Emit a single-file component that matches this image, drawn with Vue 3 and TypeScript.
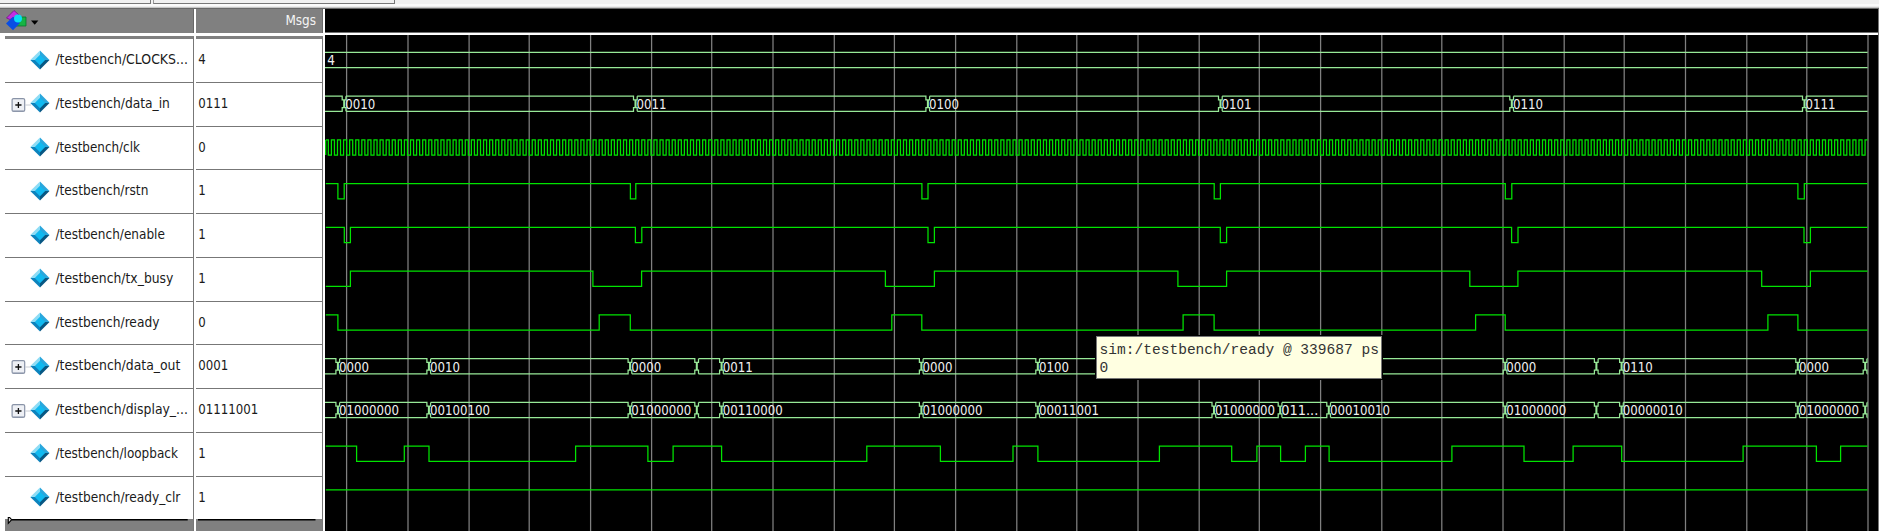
<script setup lang="ts">
interface Signal {
  name: string
  width: number
  value: string
  bus?: boolean
}

interface BusMark {
  x: number
  text?: string
}

interface BusLabel {
  x: number
  y: number
  text: string
  width: number
}

const ROW = 43.75
const LEFT = 325
const END = 1868
const AMP = 15.1

const signals: Signal[] = [
  { name: '/testbench/CLOCKS...', width: 132.5, value: '4' },
  { name: '/testbench/data_in', width: 114.5, value: '0111', bus: true },
  { name: '/testbench/clk', width: 84.5, value: '0' },
  { name: '/testbench/rstn', width: 93, value: '1' },
  { name: '/testbench/enable', width: 109.5, value: '1' },
  { name: '/testbench/tx_busy', width: 118, value: '1' },
  { name: '/testbench/ready', width: 104, value: '0' },
  { name: '/testbench/data_out', width: 125, value: '0001', bus: true },
  { name: '/testbench/display_...', width: 132.5, value: '01111001', bus: true },
  { name: '/testbench/loopback', width: 122.5, value: '1' },
  { name: '/testbench/ready_clr', width: 125, value: '1' },
]

const gridLines: number[] = [
  347, 408.4, 469.5, 529.6, 591, 652, 712.1, 773.4, 834.7, 894.8, 956, 1017.2, 1077.2,
  1138.4, 1199.6, 1259.7, 1321, 1382.2, 1442.2, 1503.4, 1564.6, 1624.6, 1685.9, 1747.2, 1807.2, 1868.4,
]

const top = (row: number): number => 52.4 + row * ROW

function wave(row: number, startHigh: boolean, edges: number[]): string {
  const hi = top(row)
  let high = startHigh
  let d = `M${LEFT + 1.2} ${high ? hi : hi + AMP}`
  for (const x of edges) {
    high = !high
    d += `H${x}V${high ? hi : hi + AMP}`
  }
  return d + `H${END}`
}

const clockEdges: number[] = []
for (let x = 328.75; x < END; x += 3.043) clockEdges.push(x)

const bitPaths: string[] = [
  wave(2, true, clockEdges) + `M${LEFT + 1.1} ${top(2)}v${AMP}`,
  wave(3, true, [338.3, 344.6, 630.8, 636.2, 922.3, 928.4, 1214.6, 1220.8, 1505.7, 1512.2, 1798.3, 1804.7]),
  wave(4, true, [344.7, 350.8, 635.8, 642.2, 928.4, 934.8, 1220.7, 1227, 1512, 1518.4, 1804.4, 1810.8]),
  wave(5, false, [350.8, 593.3, 642, 885.8, 934.8, 1178.3, 1227, 1470.2, 1518.3, 1762.1, 1810.8]),
  wave(6, true, [338.3, 599.6, 630.7, 892.2, 922.2, 1183.5, 1214.5, 1476, 1505.6, 1768.3, 1798.3]),
  wave(9, true, [
    357, 404.7, 429.4, 576, 648.3, 673.5, 722, 867.2, 940.8, 1013.4, 1038.3, 1159.8, 1232.1, 1257.3,
    1281, 1305.8, 1329.5, 1452.3, 1524.4, 1573.5, 1622.1, 1743.5, 1816.8, 1841,
  ]),
  wave(10, true, []),
]

const dataIn: BusMark[] = [
  { x: 344.6, text: '0010' }, { x: 635.9, text: '0011' }, { x: 928.3, text: '0100' },
  { x: 1220.9, text: '0101' }, { x: 1512.2, text: '0110' }, { x: 1804.9, text: '0111' },
]
const dataOut: BusMark[] = [
  { x: 338.3, text: '0000' }, { x: 429.3, text: '0010' }, { x: 630.5, text: '0000' }, { x: 697.2 },
  { x: 722, text: '0011' }, { x: 921.8, text: '0000' }, { x: 1038.2, text: '0100' },
  { x: 1505.6, text: '0000' }, { x: 1596.8 }, { x: 1622, text: '0110' }, { x: 1798.2, text: '0000' }, { x: 1865.6 },
]
const display: BusMark[] = [
  { x: 338.3, text: '01000000' }, { x: 429.3, text: '00100100' }, { x: 630.5, text: '01000000' }, { x: 697.2 },
  { x: 722, text: '00110000' }, { x: 921.8, text: '01000000' }, { x: 1038.2, text: '00011001' },
  { x: 1214.4, text: '01000000' }, { x: 1280.6, text: '011...' }, { x: 1329.2, text: '00010010' },
  { x: 1505.6, text: '01000000' }, { x: 1596.8 }, { x: 1622, text: '00000010' },
  { x: 1798.2, text: '01000000' }, { x: 1865.6 },
]

// Each value change pinches both rails together into a narrow waist.
function busPath(row: number, marks: BusMark[]): string {
  const a = top(row)
  const b = a + AMP
  let d = ''
  let from = LEFT
  for (const { x } of marks) {
    d += `M${from} ${a}H${x - 2}V${a + 3.6}H${x - 0.4}V${b - 3.6}H${x - 2}V${b}H${from}`
    d += `M${x + 1.7} ${a}V${a + 3.6}H${x + 0.4}V${b - 3.6}H${x + 1.7}V${b}`
    from = x + 1.7
  }
  return d + `M${from} ${a}H${END}M${from} ${b}H${END}`
}

const busPaths: string[] = [busPath(0, []), busPath(1, dataIn), busPath(7, dataOut), busPath(8, display)]

function labels(row: number, marks: BusMark[]): BusLabel[] {
  return marks.flatMap(({ x, text }) =>
    text ? [{ x: x + 1.1, y: 65.4 + row * ROW, text, width: text === '011...' ? 37 : text.length * 7.5 }] : [],
  )
}

const busLabels: BusLabel[] = [
  { x: 327.7, y: 65.4, text: '4', width: 7.7 },
  ...labels(1, dataIn),
  ...labels(7, dataOut),
  ...labels(8, display),
]
</script>

<template>
  <main class="viewer">
    <div class="tabs">
      <div class="tab first"></div>
      <div class="tab second"></div>
    </div>
    <div class="body">
      <section class="pane names">
        <header class="head">
          <svg width="44" height="24" viewBox="0 9 44 24">
            <path d="M19 17H26V26H16Z" fill="#16b444" stroke="#08752c" stroke-width=".8" />
            <path d="M6.5 18L14 10.5L19 15L15 17L10 19.5Z" fill="#c42ee2" stroke="#7b148f" stroke-width=".9" />
            <path d="M13 16.7L20 23.1L13 30.2L6 23.4Z" fill="#084ee4" />
            <circle cx="18" cy="18.6" r="4" fill="#08ddf4" />
            <path d="M31 20.6H38.4L34.7 24.8Z" fill="#000" />
          </svg>
        </header>
        <div class="list">
          <div v-for="s in signals" :key="s.name" class="row">
            <div class="branch">
              <svg v-if="s.bus" width="26" height="16" viewBox="0 0 26 16">
                <path d="M20.5 8H26" stroke="#c8ccd4" />
                <rect x="7.1" y="1.6" width="12.6" height="12.8" rx="1.5" fill="#eef0f5" stroke="#8993a7" stroke-width="1.2" />
                <path d="M8 13.6H19" stroke="#b3bac9" />
                <path d="M10.3 8H16.5M13.4 4.9V11.1" stroke="#111" stroke-width="1.3" />
              </svg>
            </div>
            <svg class="gem" width="20" height="20" viewBox="0 0 20 20">
              <path d="M10 .5V10H.3Z" fill="#8edcf5" />
              <path d="M10 .5L19.5 10H10Z" fill="#2aa7dc" />
              <path d="M.3 10H10V19.5Z" fill="#0d83bd" />
              <path d="M10 10H19.5L10 19.5Z" fill="#075783" />
              <path d="M10 4.8L15.2 10L10 15.2L4.8 10Z" fill="#10b9f0" />
            </svg>
            <svg class="caption" width="138" height="20">
              <text x="0.4" y="14" :textLength="s.width" lengthAdjust="spacingAndGlyphs">{{ s.name }}</text>
            </svg>
          </div>
        </div>
        <footer class="foot">
          <svg width="188" height="14" viewBox="5 517 188 14">
            <path d="M12 519.8H187.7" stroke="#000" stroke-width="1.4" />
            <path d="M8.3 516V523.3L11.7 519.7Z" fill="#ddd" stroke="#000" stroke-width="1.1" />
          </svg>
        </footer>
      </section>
      <section class="pane values">
        <header class="head msgs">Msgs</header>
        <div class="list">
          <div v-for="s in signals" :key="s.name" class="row">
            <svg class="caption" width="100" height="20">
              <text x="2.2" y="14" :textLength="s.value.length * 7.5" lengthAdjust="spacingAndGlyphs">{{ s.value }}</text>
            </svg>
          </div>
        </div>
        <footer class="foot">
          <svg width="125" height="14" viewBox="197 517 125 14">
            <path d="M199 519.8H316.5" stroke="#000" stroke-width="1.4" />
          </svg>
        </footer>
      </section>
      <section class="waves">
        <div class="ruler"></div>
        <svg class="plot" width="1553" height="496" viewBox="325.4 35 1553 496">
          <path v-for="x in gridLines" :key="x" :d="`M${x} 35V531`" class="grid" />
          <path v-for="(d, i) in busPaths" :key="'b' + i" :d="d" class="bus" />
          <path v-for="(d, i) in bitPaths" :key="'w' + i" :d="d" class="bit" />
          <text
            v-for="(l, i) in busLabels"
            :key="'l' + i"
            :x="l.x"
            :y="l.y"
            :textLength="l.width"
            lengthAdjust="spacingAndGlyphs"
            class="bus-label"
          >{{ l.text }}</text>
        </svg>
      </section>
    </div>
    <div class="tooltip">
      <div>sim:/testbench/ready @ 339687 ps</div>
      <div>0</div>
    </div>
  </main>
</template>

<style>
body {
  margin: 0;
  background: #fff;
}
</style>

<style scoped>
.viewer {
  position: relative;
  width: 1879px;
  height: 531px;
  overflow: hidden;
  background: #fff;
  font-family: 'DejaVu Sans Condensed', 'DejaVu Sans', sans-serif;
  font-size: 13.4px;
}

.viewer svg {
  display: block;
}

.tabs {
  display: flex;
  gap: 2px;
  box-sizing: border-box;
  height: 9px;
  background: linear-gradient(#f0f0f0 0 4px, #fafafa 4px 6px, #ececec 6px 7px, #c6c6c6 7px 8px, #686868 8px 9px);
}

.tab {
  box-sizing: border-box;
  height: 4px;
  border-right: 1px solid #777;
  border-bottom: 1px solid #777;
  background: #f0f0f0;
}

.first {
  width: 151px;
}

.second {
  width: 242px;
  border-left: 1px solid #999;
}

.body {
  display: flex;
  height: 522px;
}

.pane {
  display: flex;
  flex-direction: column;
  box-sizing: border-box;
}

.names {
  width: 194px;
}

.values {
  width: 129px;
  padding-left: 2px;
}

.head {
  flex: none;
  box-sizing: border-box;
  height: 24px;
  background: #808080;
  border-right: 1px solid #686868;
}

.msgs {
  padding-right: 6px;
  color: #f4f4f4;
  line-height: 23px;
  text-align: right;
}

.list {
  flex: none;
  box-sizing: border-box;
  height: 484px;
  margin-top: 3px;
  border-top: 3px solid #808080;
  border-right: 1px solid #777;
}

.names .list {
  margin-left: 5px;
}

.row {
  display: flex;
  box-sizing: border-box;
  height: 43.75px;
  align-items: flex-start;
  border-bottom: 1px solid #777;
}

.row:last-child {
  border-bottom: 0;
}

.branch {
  width: 25px;
  padding-top: 13.8px;
}

.gem {
  flex: none;
  margin-top: 10.7px;
}

.caption {
  flex: none;
  margin-top: 11px;
}

.names .caption {
  margin-left: 5px;
}

.caption text {
  fill: #1a1a1a;
}

.foot {
  flex: none;
  height: 14px;
  margin-top: -3px;
  background: linear-gradient(transparent 0 2px, #808080 2px);
  border-right: 1px solid #777;
}

.names .foot {
  margin-left: 5px;
}

.waves {
  flex: none;
  box-sizing: border-box;
  width: 1554px;
  margin-left: 2px;
  border-right: 1px solid #777;
}

.ruler {
  height: 23px;
  background: #000;
  border-bottom: 1px solid #707070;
}

.plot {
  margin-top: 2px;
  background: #000;
}

.grid {
  stroke: #808080;
  stroke-width: 1.25;
}

.bus,
.bit {
  fill: none;
  stroke-width: 1.25;
}

.bus {
  stroke: #98e998;
}

.bit {
  stroke: #00e400;
}

.bus-label {
  fill: #f0f0f0;
}

.tooltip {
  position: absolute;
  left: 1096px;
  top: 336px;
  box-sizing: border-box;
  width: 286px;
  height: 43px;
  padding: 4px 0 0 2.6px;
  border: 1px solid #777;
  outline: 1px solid #000;
  background: #ffffe1;
  color: #333;
  font-family: 'Liberation Mono', monospace;
  font-size: 14.56px;
  line-height: 18.2px;
  white-space: pre;
}
</style>
